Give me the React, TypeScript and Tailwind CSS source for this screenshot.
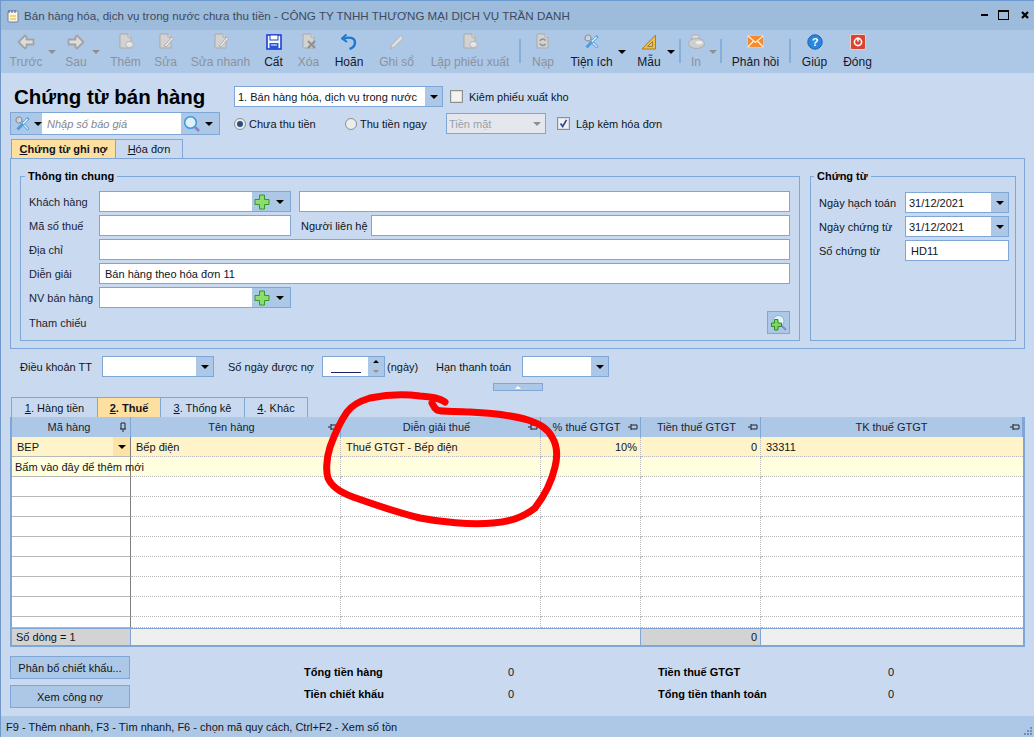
import type { ReactNode } from "react";

const disabledText = "text-[#8b929c]";

const IconBack = ({ flip = false }: { flip?: boolean }) => (
  <svg width="18" height="16" viewBox="0 0 18 16" className={flip ? "-scale-x-100" : ""}>
    <path d="M1.5 8 L8 1.5 L9.5 3 V5.5 H16.5 V10.5 H9.5 V13 L8 14.5 Z" fill="#dcdcdc" stroke="#a3a3a3" strokeWidth="1.8" strokeLinejoin="round" />
  </svg>
);

const IconDoc = ({ kind }: { kind: "add" | "edit" | "del" | "reload" | "quick" }) => (
  <svg width="16" height="17" viewBox="0 0 16 17">
    <path d="M2 1 H10 L13 4 V15 H2 Z" fill="#d2d2d2" stroke="#a9a9a9" />
    <path d="M10 1 V4 H13" fill="#eee" stroke="#a9a9a9" />
    {kind === "add" && <ellipse cx="11.5" cy="11.5" rx="3.8" ry="3" fill="#e6e6e6" stroke="#b5b5b5" />}
    {(kind === "edit" || kind === "quick") && <path d="M6 13 L14 4 L15.5 5.5 L8 14 Z" fill="#eee" stroke="#aaa" />}
    {kind === "del" && <path d="M7 8 L14 15 M14 8 L7 15" stroke="#8f8f8f" strokeWidth="2" />}
    {kind === "reload" && <path d="M5 8 C6 5.5 9 5.5 10.5 7.5 M10.5 11 C9 13 6 13 5 10.5" fill="none" stroke="#8f8f8f" strokeWidth="1.6" />}
  </svg>
);

const IconSave = () => (
  <svg width="16" height="16" viewBox="0 0 16 16">
    <rect x="1" y="1" width="14" height="14" fill="#f4f8ff" stroke="#1f3fd0" strokeWidth="1.6" />
    <rect x="4" y="1" width="8" height="5" fill="#ffffff" stroke="#1f3fd0" />
    <rect x="3.5" y="9" width="9" height="6" fill="#2b55d8" />
    <rect x="5" y="10.5" width="6" height="1" fill="#fff" />
  </svg>
);

const IconUndo = () => (
  <svg width="16" height="16" viewBox="0 0 16 16" fill="none">
    <path d="M3 5 C7 2.5 14 3.5 14 8.5 C14 11.5 11.5 14 8.5 15" stroke="#1b78d0" strokeWidth="2.4" />
    <path d="M5.5 0.5 L1 4.5 L6 8" stroke="#1b78d0" strokeWidth="2" />
  </svg>
);

const IconPencil = () => (
  <svg width="16" height="16" viewBox="0 0 16 16">
    <path d="M1.5 14.5 L2.5 11 L11.5 1.5 L14.5 4 L5 13.5 Z" fill="#dedede" stroke="#b0b0b0" />
  </svg>
);

const IconTools = () => (
  <svg width="16" height="16" viewBox="0 0 16 16" fill="none">
    <path d="M4 4 L13.5 13.5" stroke="#4f9ddc" strokeWidth="3" />
    <path d="M5 5 L13 13" stroke="#d8edfb" strokeWidth="1.2" />
    <path d="M13.5 2 L2.5 13.5" stroke="#4f9ddc" strokeWidth="3" />
    <path d="M12.5 3 L8 7.8" stroke="#e8f5fe" strokeWidth="1.4" />
    <circle cx="4" cy="4" r="3" fill="#d6d9dc" stroke="#8a9199" strokeWidth="1.2" />
    <circle cx="3.4" cy="3.4" r="1" fill="#adc8e6" />
  </svg>
);

const IconRuler = () => (
  <svg width="16" height="16" viewBox="0 0 16 16">
    <path d="M14.5 1 V15 H1 Z" fill="#e9bf4f" stroke="#a97f22" />
    <path d="M11.5 7.5 V12.5 H6.5 Z" fill="#adc8e6" stroke="#a97f22" />
  </svg>
);

const IconPrinter = () => (
  <svg width="18" height="16" viewBox="0 0 18 16">
    <path d="M5 1 H12 V6 H5 Z" fill="#d9d9d9" stroke="#b2b2b2" />
    <ellipse cx="9.5" cy="9.5" rx="8" ry="5" fill="#cfcfcf" stroke="#adadad" />
    <ellipse cx="12" cy="8.5" rx="3.5" ry="1.8" fill="#ececec" />
  </svg>
);

const IconMail = () => (
  <svg width="17" height="13" viewBox="0 0 17 13">
    <rect x="0.5" y="0.5" width="16" height="12" fill="#f58a2e" stroke="#f7c090" />
    <path d="M1 1 L8.5 7.5 L16 1 M1 12 L6.5 6 M16 12 L10.5 6" fill="none" stroke="#fff3e3" strokeWidth="1.2" />
  </svg>
);

const IconHelp = () => (
  <svg width="16" height="16" viewBox="0 0 16 16">
    <circle cx="8" cy="8" r="7.2" fill="#2a86dc" stroke="#1761ad" />
    <text x="8" y="12" textAnchor="middle" fontSize="11" fontWeight="700" fill="#ffffff" fontFamily="Liberation Sans, sans-serif">?</text>
  </svg>
);

const IconPower = () => (
  <svg width="16" height="16" viewBox="0 0 16 16" fill="none">
    <rect x="0.5" y="0.5" width="15" height="15" rx="1.5" fill="#d9432f" stroke="#f1d2cb" />
    <circle cx="8" cy="8" r="3.6" stroke="#fff" strokeWidth="1.6" />
    <path d="M8 3.5 V7.5" stroke="#fff" strokeWidth="1.6" />
  </svg>
);

const IconPlus = () => (
  <svg width="16" height="16" viewBox="0 0 16 16">
    <path d="M5.5 1 H10.5 V5.5 H15 V10.5 H10.5 V15 H5.5 V10.5 H1 V5.5 H5.5 Z" fill="#8fdc6a" stroke="#2f9a2b" />
  </svg>
);

const IconSearch = () => (
  <svg width="18" height="18" viewBox="0 0 18 18" fill="none">
    <circle cx="7.5" cy="7.5" r="5.8" fill="#dff0fb" stroke="#3b9ad9" strokeWidth="1.5" />
    <path d="M12 12 L16 16" stroke="#8f7fcb" strokeWidth="2.6" />
  </svg>
);

const IconSearchPlus = () => (
  <svg width="16" height="17" viewBox="0 0 16 17">
    <circle cx="7.5" cy="7" r="5.5" fill="#e2f1fb" stroke="#7fb5dc" />
    <path d="M11 12 L15 16" stroke="#8f7fcb" strokeWidth="2" />
    <path d="M3.5 5.5 H7 V9 H10.5 V12.5 H7 V16 H3.5 V12.5 H0.5 V9 H3.5 Z" fill="#7ed957" stroke="#2f8a2b" />
  </svg>
);

const Pin = ({ vertical = false }: { vertical?: boolean }) => (
  <svg width="10" height="10" viewBox="0 0 10 10" fill="none" className={vertical ? "-rotate-90" : ""}>
    <path d="M0 5 H3 M3 2 V8 M3 3 H9 V7 H3" stroke="#20242c" />
  </svg>
);

const Caret = ({ gray = false }: { gray?: boolean }) => (
  <span className={gray ? "w-0 h-0 border-x-[4px] border-x-transparent border-t-[4px] border-t-[#8f8f8f]" : "w-0 h-0 border-x-[4px] border-x-transparent border-t-[4px] border-t-black"} />
);

const Separator = ({ className }: { className: string }) => (
  <div className={`w-[2px] h-[24px] mt-[9px] bg-[#85aedb] ${className}`} />
);

const ToolButton = ({ label, icon, className, off = false }: { label: string; icon: ReactNode; className: string; off?: boolean }) => (
  <div className={`flex flex-col items-center shrink-0 ${className}`}>
    <div className="h-[23px] flex items-center">{icon}</div>
    <span className={`mt-[2px] text-[12px] whitespace-nowrap ${off ? disabledText : "text-[#14192a]"}`}>{label}</span>
  </div>
);

const ToolCaret = ({ className = "", gray = false }: { className?: string; gray?: boolean }) => (
  <div className={`flex justify-center pt-[20px] shrink-0 ${className}`}>
    <Caret gray={gray} />
  </div>
);

const Combo = ({ text, className }: { text?: string; className: string }) => (
  <div className={`flex border border-[#7ea6d6] bg-white shrink-0 h-[21px] ${className}`}>
    <div className="flex-1 px-[3px] flex items-center whitespace-nowrap overflow-hidden">{text}</div>
    <div className="w-[17px] bg-[#adc8e6] flex items-center justify-center">
      <Caret />
    </div>
  </div>
);

const AddCombo = ({ className }: { className: string }) => (
  <div className={`flex border border-[#7ea6d6] bg-white h-[21px] shrink-0 ${className}`}>
    <div className="flex-1" />
    <div className="w-[38px] bg-[#adc8e6] flex items-center">
      <span className="ml-[2px]"><IconPlus /></span>
      <span className="ml-[6px] flex"><Caret /></span>
    </div>
  </div>
);

const Input = ({ text, className }: { text?: string; className: string }) => (
  <div className={`h-[21px] border border-[#7ea6d6] bg-white px-[5px] flex items-center whitespace-nowrap shrink-0 ${className}`}>{text}</div>
);

const FormLabel = ({ children }: { children: ReactNode }) => (
  <div className="w-[70px] shrink-0 whitespace-nowrap text-[#1c2233]">{children}</div>
);

const CheckBox = ({ checked = false }: { checked?: boolean }) => (
  <div className="w-[13px] h-[13px] border border-[#8e8f8f] bg-[#f2f2f2] shadow-[inset_0_0_0_1px_#dcdcdc] flex items-center justify-center shrink-0">
    {checked && (
      <svg width="9" height="9" viewBox="0 0 9 9" fill="none">
        <path d="M1.5 4.5 L3.7 7.5 L7.5 0.8" stroke="#2a4a9b" strokeWidth="1.7" />
      </svg>
    )}
  </div>
);

const Radio = ({ checked = false }: { checked?: boolean }) => (
  <div className="w-[12px] h-[12px] rounded-full border border-[#8e8f8f] bg-[#ececec] flex items-center justify-center shrink-0">
    {checked && <div className="w-[6px] h-[6px] rounded-full bg-[#25507f]" />}
  </div>
);

const columns = "grid grid-cols-[119px_210px_200px_100px_120px_262px]";
const cell = "border-r border-b border-dotted border-[#b8b8b8]";

const HeaderCell = ({ text, vertical = false, pad = "pr-[8px]" }: { text: string; vertical?: boolean; pad?: string }) => (
  <div className={`relative h-[20px] border-r border-[#7ea6d6] bg-[#adc8e6] flex items-center justify-center text-[#1c2233] ${pad}`}>
    {text}
    <span className="absolute right-[2px] top-[5px] flex">
      <Pin vertical={vertical} />
    </span>
  </div>
);

const BlankRow = ({ bg = "bg-white", h = "h-[20px]", text }: { bg?: string; h?: string; text?: string }) => (
  <div className={`${columns} ${bg}`}>
    <div className={`${h} border-r border-b border-r-[#808080] border-b-[#b8b8b8] border-b-dotted whitespace-nowrap pl-[3px] flex items-center`}>{text}</div>
    <div className={`${h} ${cell}`} />
    <div className={`${h} ${cell}`} />
    <div className={`${h} ${cell}`} />
    <div className={`${h} ${cell}`} />
    <div className={`${h} border-b border-dotted border-[#b8b8b8]`} />
  </div>
);

const App = () => {
  return (
    <div className="relative w-[1034px] h-[737px] overflow-hidden flex flex-col bg-[#c9daf0] border-l border-l-[#6f97c8] text-[11px] leading-[14px] text-[#101420] font-['Liberation_Sans',Arial,sans-serif]">
      {/* title bar */}
      <div className="h-[30px] shrink-0 bg-[#9dbbdb] border-t border-t-[#6a9ad0] flex items-center pl-[6px]">
        <svg width="13" height="14" viewBox="0 0 13 14">
          <rect x="1" y="2" width="10" height="11" rx="1" fill="#fdf6d0" stroke="#6f7fb5" />
          <path d="M2 1 V4 M5 1 V4 M8 1 V4" stroke="#4a5fa8" />
          <path d="M3 7 H9 M3 10 H9" stroke="#e0b23c" />
        </svg>
        <span className="ml-[4px] text-[11.6px] text-[#3d4a5c] whitespace-nowrap">Bán hàng hóa, dịch vụ trong nước chưa thu tiền - CÔNG TY TNHH THƯƠNG MẠI DỊCH VỤ TRẦN DANH</span>
        <div className="ml-auto mr-[5px] mb-[2px] flex items-center">
          <div className="w-[7px] h-[2px] bg-black" />
          <div className="ml-[10px] w-[11px] h-[10px] border border-black border-t-2" />
          <svg className="ml-[12px]" width="8" height="8" viewBox="0 0 8 8">
            <path d="M1 1 L7 7 M7 1 L1 7" stroke="#000" strokeWidth="2.2" />
          </svg>
        </div>
      </div>

      {/* toolbar */}
      <div className="h-[43px] shrink-0 bg-[#adc8e6] flex pl-[5px]">
        <ToolButton off label="Trước" icon={<IconBack />} className="w-[40px]" />
        <ToolCaret gray className="w-[11px]" />
        <ToolButton off label="Sau" icon={<IconBack flip />} className="w-[28px] ml-[5px]" />
        <ToolCaret gray className="w-[11px]" />
        <ToolButton off label="Thêm" icon={<IconDoc kind="add" />} className="w-[41px] ml-[4px]" />
        <ToolButton off label="Sửa" icon={<IconDoc kind="edit" />} className="w-[39px]" />
        <ToolButton off label="Sửa nhanh" icon={<IconDoc kind="quick" />} className="w-[71px]" />
        <ToolButton label="Cất" icon={<IconSave />} className="w-[35px]" />
        <ToolButton off label="Xóa" icon={<IconDoc kind="del" />} className="w-[35px]" />
        <ToolButton label="Hoãn" icon={<IconUndo />} className="w-[46px]" />
        <ToolButton off label="Ghi sổ" icon={<IconPencil />} className="w-[49px]" />
        <ToolButton off label="Lập phiếu xuất" icon={<IconDoc kind="add" />} className="w-[98px]" />
        <Separator className="shrink-0" />
        <ToolButton off label="Nạp" icon={<IconDoc kind="reload" />} className="w-[44px]" />
        <ToolButton label="Tiện ích" icon={<IconTools />} className="w-[53px]" />
        <ToolCaret className="w-[8px]" />
        <ToolButton label="Mẫu" icon={<IconRuler />} className="w-[36px] ml-[5px]" />
        <ToolCaret className="w-[8px]" />
        <Separator className="ml-[4px] shrink-0" />
        <ToolButton off label="In" icon={<IconPrinter />} className="w-[26px] ml-[2px]" />
        <ToolCaret gray className="w-[7px]" />
        <Separator className="ml-[4px] shrink-0" />
        <ToolButton label="Phản hồi" icon={<IconMail />} className="w-[67px]" />
        <Separator className="shrink-0" />
        <ToolButton label="Giúp" icon={<IconHelp />} className="w-[47px]" />
        <ToolButton label="Đóng" icon={<IconPower />} className="w-[39px]" />
      </div>

      {/* main */}
      <div className="flex-1 flex flex-col pt-[13px] pl-[9px] pr-[8px]">
        <div className="flex items-center h-[21px] pl-[4px]">
          <div className="w-[220px] shrink-0 text-[20.5px] leading-[24px] font-bold text-black whitespace-nowrap">Chứng từ bán hàng</div>
          <Combo text="1. Bán hàng hóa, dịch vụ trong nước" className="w-[209px]" />
          <div className="ml-[7px]"><CheckBox /></div>
          <span className="ml-[6px]">Kiêm phiếu xuất kho</span>
        </div>

        <div className="flex items-center h-[23px] mt-[5px]">
          <div className="w-[210px] h-[23px] border border-[#7ea6d6] bg-[#adc8e6] flex shrink-0">
            <div className="w-[31px] flex items-center pl-[4px]">
              <IconTools />
              <span className="ml-[3px] flex"><Caret /></span>
            </div>
            <div className="w-[139px] bg-white flex items-center pl-[5px] italic text-[#7f8690]">Nhập số báo giá</div>
            <div className="flex-1 flex items-center pl-[2px]">
              <IconSearch />
              <span className="ml-[4px] flex"><Caret /></span>
            </div>
          </div>
          <div className="ml-[14px]"><Radio checked /></div>
          <span className="ml-[3px] w-[96px]">Chưa thu tiền</span>
          <Radio />
          <span className="ml-[3px] w-[86px]">Thu tiền ngay</span>
          <div className="w-[100px] h-[21px] border border-[#7ea6d6] bg-[#e4e8ee] flex items-center shrink-0">
            <span className="flex-1 pl-[2px] text-[#9aa0a8]">Tiền mặt</span>
            <span className="w-[17px] flex justify-center"><Caret gray /></span>
          </div>
          <div className="ml-[11px]"><CheckBox checked /></div>
          <span className="ml-[6px]">Lập kèm hóa đơn</span>
        </div>

        {/* upper tabs */}
        <div className="flex h-[19px] mt-[4px] pl-[1px]">
          <div className="w-[105px] bg-[#fddf9f] border border-b-0 border-[#7ea6d6] flex items-center justify-center font-bold text-[#101420]"><span><u>C</u>hứng từ ghi nợ</span></div>
          <div className="w-[67px] border border-l-0 border-b-0 border-[#7ea6d6] flex items-center justify-center"><span><u>H</u>óa đơn</span></div>
        </div>

        <div className="h-[191px] w-[1015px] border border-[#7ea6d6] flex pl-[9px] pt-[10px] gap-[10px]">
          <fieldset className="w-[780px] h-[172px] border border-[#7ea6d6] pl-[8px] shrink-0">
            <legend className="-ml-[4px] px-[3px] h-[14px] font-bold text-black">Thông tin chung</legend>
            <div className="flex flex-col gap-[3px] pt-[8px] w-[761px]">
              <div className="flex items-center">
                <FormLabel>Khách hàng</FormLabel>
                <AddCombo className="w-[192px]" />
                <Input className="ml-[8px] flex-1" />
              </div>
              <div className="flex items-center">
                <FormLabel>Mã số thuế</FormLabel>
                <Input className="w-[192px]" />
                <span className="ml-[10px] w-[70px] whitespace-nowrap">Người liên hệ</span>
                <Input className="flex-1" />
              </div>
              <div className="flex items-center">
                <FormLabel>Địa chỉ</FormLabel>
                <Input className="flex-1" />
              </div>
              <div className="flex items-center">
                <FormLabel>Diễn giải</FormLabel>
                <Input className="flex-1" text="Bán hàng theo hóa đơn 11" />
              </div>
              <div className="flex items-center">
                <FormLabel>NV bán hàng</FormLabel>
                <AddCombo className="w-[192px]" />
              </div>
              <div className="flex items-start">
                <div className="pt-[5px]"><FormLabel>Tham chiếu</FormLabel></div>
                <div className="ml-auto w-[23px] h-[23px] border border-[#7ea6d6] bg-[#adc8e6] flex items-center justify-center">
                  <IconSearchPlus />
                </div>
              </div>
            </div>
          </fieldset>

          <fieldset className="w-[206px] h-[172px] border border-[#7ea6d6] pl-[8px] shrink-0">
            <legend className="-ml-[5px] px-[3px] h-[14px] font-bold text-black">Chứng từ</legend>
            <div className="flex flex-col gap-[3px] pt-[9px]">
              <div className="flex items-center">
                <div className="w-[86px] shrink-0">Ngày hạch toán</div>
                <Combo text="31/12/2021" className="w-[104px]" />
              </div>
              <div className="flex items-center">
                <div className="w-[86px] shrink-0">Ngày chứng từ</div>
                <Combo text="31/12/2021" className="w-[104px]" />
              </div>
              <div className="flex items-center">
                <div className="w-[86px] shrink-0">Số chứng từ</div>
                <Input text="HD11" className="w-[104px]" />
              </div>
            </div>
          </fieldset>
        </div>

        {/* terms row */}
        <div className="flex items-center h-[21px] mt-[7px] pl-[10px]">
          <span className="w-[82px] shrink-0">Điều khoản TT</span>
          <Combo className="w-[112px]" />
          <span className="ml-[14px] w-[94px] shrink-0 whitespace-nowrap">Số ngày được nợ</span>
          <div className="w-[63px] h-[21px] border border-[#7ea6d6] bg-white flex shrink-0">
            <div className="flex-1 flex items-end justify-center pb-[3px]">
              <div className="w-[30px] h-[1px] bg-[#20206a]" />
            </div>
            <div className="w-[16px] bg-[#adc8e6] flex flex-col items-center justify-around">
              <span className="w-0 h-0 border-x-[3px] border-x-transparent border-b-[3px] border-b-black" />
              <span className="w-0 h-0 border-x-[3px] border-x-transparent border-t-[3px] border-t-[#9a8a9a]" />
            </div>
          </div>
          <span className="ml-[2px] w-[49px] shrink-0">(ngày)</span>
          <span className="w-[86px] shrink-0 whitespace-nowrap">Hạn thanh toán</span>
          <Combo className="w-[87px]" />
        </div>

        <div className="h-[8px] mt-[6px] ml-[483px] w-[50px] bg-[#adc8e6] border border-[#7ea6d6] flex items-center justify-center">
          <span className="w-0 h-0 border-x-[3px] border-x-transparent border-b-[3px] border-b-white" />
        </div>

        {/* grid tabs */}
        <div className="flex h-[20px] mt-[6px] pl-[1px]">
          <div className="w-[87px] border border-b-0 border-[#7ea6d6] flex items-center justify-center"><span><u>1</u>. Hàng tiền</span></div>
          <div className="w-[62px] bg-[#fddf9f] border-t border-[#7ea6d6] flex items-center justify-center font-bold"><span><u>2</u>. Thuế</span></div>
          <div className="w-[85px] border border-b-0 border-[#7ea6d6] flex items-center justify-center"><span><u>3</u>. Thống kê</span></div>
          <div className="w-[63px] border border-l-0 border-b-0 border-[#7ea6d6] flex items-center justify-center"><span><u>4</u>. Khác</span></div>
        </div>

        <div className="w-[1015px] border-x-2 border-b-2 border-[#7ea6d6] bg-white">
          <div className={columns}>
            <HeaderCell text="Mã hàng" vertical pad="pr-[4px]" />
            <HeaderCell text="Tên hàng" />
            <HeaderCell text="Diễn giải thuế" />
            <HeaderCell text="% thuế GTGT" />
            <HeaderCell text="Tiền thuế GTGT" />
            <HeaderCell text="TK thuế GTGT" pad="pr-0" />
          </div>

          <div className={`${columns} bg-[#fff3c9]`}>
            <div className="h-[20px] border-r border-b border-r-[#808080] border-b-[#b8b8b8] border-b-dotted flex items-center pl-[5px]">
              <span className="flex-1">BEP</span>
              <span className="w-[17px] h-full bg-[#fde4a6] flex items-center justify-center"><Caret /></span>
            </div>
            <div className={`h-[20px] ${cell} flex items-center pl-[5px]`}>Bếp điện</div>
            <div className={`h-[20px] ${cell} flex items-center pl-[5px]`}>Thuế GTGT - Bếp điện</div>
            <div className={`h-[20px] ${cell} flex items-center justify-end pr-[3px]`}>10%</div>
            <div className={`h-[20px] ${cell} flex items-center justify-end pr-[3px]`}>0</div>
            <div className="h-[20px] border-b border-dotted border-[#b8b8b8] flex items-center pl-[5px]">33311</div>
          </div>

          <BlankRow bg="bg-[#ffffdf]" text="Bấm vào đây để thêm mới" />
          <BlankRow />
          <BlankRow />
          <BlankRow />
          <BlankRow />
          <BlankRow />
          <BlankRow />
          <BlankRow />
          <BlankRow h="h-[11px]" />

          <div className={`${columns} h-[17px] border-t border-[#7ea6d6]`}>
            <div className="bg-[#d3d3d3] border-r border-[#7ea6d6] flex items-center pl-[4px] whitespace-nowrap">Số dòng = 1</div>
            <div className="col-span-3 bg-[#efefef] border-r border-[#7ea6d6]" />
            <div className="bg-[#d3d3d3] border-r border-[#7ea6d6] flex items-center justify-end pr-[3px]">0</div>
            <div className="bg-[#efefef]" />
          </div>
        </div>

        {/* bottom */}
        <div className="flex mt-[9px]">
          <div className="w-[120px] flex flex-col gap-[6px] shrink-0">
            <div className="h-[23px] border border-[#7ea6d6] bg-[#adc8e6] flex items-center justify-center whitespace-nowrap">Phân bổ chiết khấu...</div>
            <div className="h-[23px] border border-[#7ea6d6] bg-[#adc8e6] flex items-center justify-center">Xem công nợ</div>
          </div>
          <div className="ml-[174px] w-[210px] pt-[9px] flex flex-col gap-[8px] shrink-0">
            <div className="flex justify-between h-[14px]"><span className="font-bold text-black">Tổng tiền hàng</span><span>0</span></div>
            <div className="flex justify-between h-[14px]"><span className="font-bold text-black">Tiền chiết khấu</span><span>0</span></div>
          </div>
          <div className="ml-[144px] w-[236px] pt-[9px] flex flex-col gap-[8px] shrink-0">
            <div className="flex justify-between h-[14px]"><span className="font-bold text-black">Tiền thuế GTGT</span><span>0</span></div>
            <div className="flex justify-between h-[14px]"><span className="font-bold text-black">Tổng tiền thanh toán</span><span>0</span></div>
          </div>
        </div>
      </div>

      {/* status bar */}
      <div className="relative h-[21px] shrink-0 bg-[#adc7e6] flex items-center pl-[5px] whitespace-nowrap">
        F9 - Thêm nhanh, F3 - Tìm nhanh, F6 - chọn mã quy cách, Ctrl+F2 - Xem số tồn
        <svg className="absolute right-[1px] bottom-[1px]" width="10" height="10" viewBox="0 0 10 10" fill="#6f8fb5">
          <rect x="7" y="1" width="2" height="2" />
          <rect x="4" y="4" width="2" height="2" />
          <rect x="7" y="4" width="2" height="2" />
          <rect x="1" y="7" width="2" height="2" />
          <rect x="4" y="7" width="2" height="2" />
          <rect x="7" y="7" width="2" height="2" />
        </svg>
      </div>

      {/* red hand-drawn circle */}
      <svg className="absolute left-[-1px] top-0 pointer-events-none" width="1034" height="737" viewBox="0 0 1034 737" fill="none">
        <path
          d="M445 402 C440 398 433 397 420 396 C405 394 385 395 370 398 C360 401 352 405 347 412 C340 422 334 436 330 447 C326 460 326 472 328 478 C332 488 342 493 353 497 C370 503 395 512 420 518 C440 522 470 525 493 523 C510 522 525 516 535 508 C545 495 552 480 555 467 C558 455 557 445 552 437 C547 428 540 424 528 420 C515 416 490 413 470 412 C455 411 440 412 437 410 C434 408 433 405 432 403"
          stroke="#ff0000"
          strokeWidth="7"
          strokeLinecap="round"
          strokeLinejoin="round"
        />
      </svg>
    </div>
  );
};

export default App;
